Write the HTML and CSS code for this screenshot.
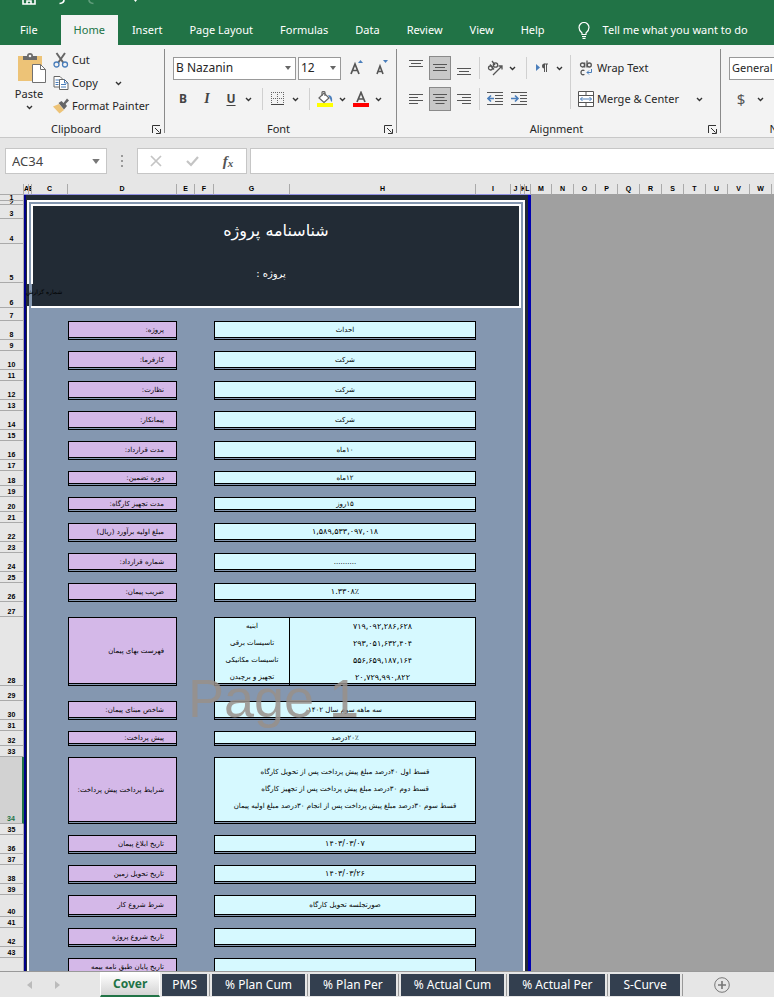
FILE: index.html
```html
<!DOCTYPE html>
<html lang="en">
<head>
<meta charset="utf-8">
<title>Project workbook</title>
<link rel="stylesheet" href="styles.css">
</head>
<body>
<svg class="defs" aria-hidden="true">
  <symbol id="chev" viewBox="0 0 7 5"><path d="M1 1l2.5 2.5L6 1" fill="none" stroke="#333" stroke-width="1.4"/></symbol>
  <symbol id="tri" viewBox="0 0 6 4"><path d="M0 0h6L3 4z" fill="#666"/></symbol>
  <symbol id="launch" viewBox="0 0 9 9"><path d="M.5 8V.5H8M8.500 4v4.500H4M3 3l4.500 4.500" fill="none" stroke="#333"/></symbol>
</svg>

<header class="titlebar">
  <div class="quick">
    <svg width="14" height="5" viewBox="0 0 14 5"><path d="M1 0v4h12V0M5 4V1h4v3" fill="none" stroke="#fff" stroke-width="1.600"/></svg>
    <svg width="8" height="5" viewBox="0 0 8 5"><path d="M6 0q0 3-4.500 3.500" fill="none" stroke="#fff" stroke-width="1.600"/></svg>
    <svg width="8" height="5" viewBox="0 0 8 5"><path d="M1 0q0 3 4.500 3.500" fill="none" stroke="#5f9c7a" stroke-width="1.600"/></svg>
    <svg width="3" height="3" viewBox="0 0 3 3"><path d="M0 0h3L1.500 2z" fill="#fff"/></svg>
  </div>
  <nav class="menu">
    <a href="#file">File</a>
    <a href="#home" class="on">Home</a>
    <a href="#insert">Insert</a>
    <a href="#layout">Page Layout</a>
    <a href="#formulas">Formulas</a>
    <a href="#data">Data</a>
    <a href="#review">Review</a>
    <a href="#view">View</a>
    <a href="#help">Help</a>
    <a href="#tell" class="tell"><svg width="12" height="17" viewBox="0 0 12 17"><path d="M4 12.500V11Q1 8.500 1 5.500a5 5 0 0 1 10 0Q11 8.500 8 11v1.500zM4 14.500h4M4.500 16.300h3" fill="none" stroke="#fff" stroke-width="1.200"/></svg>Tell me what you want to do</a>
  </nav>
</header>

<section class="ribbon">
  <div class="group clipboard">
    <div class="tools">
      <button class="paste">
        <svg width="28" height="30" viewBox="0 0 28 30"><path d="M0 3h24v25H0z" fill="#edc377"/><path d="M5 7V3h4q0-3 3-3t3 3h4v4z" fill="#6b6b6b"/><circle cx="12" cy="3" r="1.300" fill="#f3f3f3"/><path d="M14.500 11.500h8l5 5v13h-13z" fill="#fff" stroke="#707070"/><path d="M22.500 11.500v5h5" fill="none" stroke="#707070"/></svg>
        Paste
        <svg width="7" height="5"><use href="#chev"/></svg>
      </button>
      <div class="cmds">
        <button><svg width="16" height="16" viewBox="0 0 16 16"><path d="M3.500 1l7 10M12 1L5 11" stroke="#666" stroke-width="2" fill="none"/><circle cx="3.500" cy="12.500" r="2.500" fill="none" stroke="#4a7ebb" stroke-width="1.300"/><circle cx="12" cy="12.500" r="2.500" fill="none" stroke="#4a7ebb" stroke-width="1.300"/></svg>Cut</button>
        <button><svg width="16" height="16" viewBox="0 0 16 16"><path d="M1 1.500h6l2 2V12H1z" fill="#fff" stroke="#666"/><path d="M2.500 5h4M2.500 7.500h3M2.500 9.500h3" stroke="#4a7ebb"/><path d="M6.500 4.500h5l3.500 3.500v6.500H6.500z" fill="#fff" stroke="#666"/><path d="M11.500 4.500V8H15M8 9.500h5M8 12h5" stroke="#4a7ebb" fill="none"/></svg>Copy<svg class="far" width="7" height="5"><use href="#chev"/></svg></button>
        <button><svg width="16" height="16" viewBox="0 0 16 16"><path d="M0 8.500l6-2.500 5 6-4.500 3.500z" fill="#edc377"/><path d="M5.500 5l3-2 2 2 3.500-4.500L16 2.500 12.500 6l1.500 2-3 3.500z" fill="#666"/></svg>Format Painter</button>
      </div>
    </div>
    <div class="caption"><span>Clipboard</span><button aria-label="Clipboard options"><svg width="9" height="9"><use href="#launch"/></svg></button></div>
  </div>

  <div class="group font">
    <div class="tools stack">
      <div class="line">
        <label class="combo face"><select aria-label="Font"><option>B Nazanin</option></select><svg width="6" height="4"><use href="#tri"/></svg></label>
        <label class="combo size"><select aria-label="Font size"><option>12</option></select><svg width="6" height="4"><use href="#tri"/></svg></label>
        <button class="icon grow" aria-label="Increase font size"><svg width="16" height="18" viewBox="0 0 16 18"><path d="M2 15L6 5l4 10M3.500 11.500h5" fill="none" stroke="#555" stroke-width="1.700"/><path d="M9 4l2.500-3L14 4z" fill="#4a7ebb"/></svg></button>
        <button class="icon" aria-label="Decrease font size"><svg width="16" height="18" viewBox="0 0 16 18"><path d="M3 15l3-8 3 8M4 12.500h4" fill="none" stroke="#555" stroke-width="1.600"/><path d="M9 1h5l-2.500 3z" fill="#4a7ebb"/></svg></button>
      </div>
      <div class="line">
        <button class="icon b">B</button>
        <button class="icon i">I</button>
        <button class="icon u">U</button>
        <button class="drop" aria-label="Underline style"><svg width="7" height="5"><use href="#chev"/></svg></button>
        <i class="sep"></i>
        <button class="icon" aria-label="Borders"><svg width="14" height="14" viewBox="0 0 14 14"><path d="M.5 0v13M6.500 0v13M12.500 0v13M0 .5h13M0 6.500h13" stroke="#666" stroke-dasharray="1 1"/><path d="M0 12.500h13" stroke="#444"/></svg></button>
        <button class="drop" aria-label="Border style"><svg width="7" height="5"><use href="#chev"/></svg></button>
        <i class="sep"></i>
        <button class="icon" aria-label="Fill color"><svg width="16" height="16" viewBox="0 0 16 16"><path d="M0 12h16v4H0z" fill="#ff0"/><path d="M2 7l5-5 5 5-5 4.500z" fill="#fff" stroke="#666" stroke-width="1.200"/><path d="M5 5V1.500q0-1 1.500-1T8 1.500V5" fill="none" stroke="#666" stroke-width="1.200"/><path d="M11 4q5 0 4 7-1.500-1-2-3.500z" fill="#4a7ebb"/></svg></button>
        <button class="drop" aria-label="Fill color choices"><svg width="7" height="5"><use href="#chev"/></svg></button>
        <button class="icon" aria-label="Font color"><svg width="16" height="16" viewBox="0 0 16 16"><path d="M0 12h16v4H0z" fill="#f00"/><path d="M4 11l4-9.500L12 11M5.500 8h5" fill="none" stroke="#555" stroke-width="1.700"/></svg></button>
        <button class="drop" aria-label="Font color choices"><svg width="7" height="5"><use href="#chev"/></svg></button>
      </div>
    </div>
    <div class="caption"><span>Font</span><button aria-label="Font options"><svg width="9" height="9"><use href="#launch"/></svg></button></div>
  </div>

  <div class="group align">
    <div class="tools">
      <div class="stack">
        <div class="line">
          <button class="tile" aria-label="Top align"><svg width="14" height="18" viewBox="0 0 14 18"><path d="M0 1.500h14M2 4.500h10M0 7.500h14" stroke="#555"/></svg></button>
          <button class="tile on" aria-label="Middle align"><svg width="14" height="18" viewBox="0 0 14 18"><path d="M0 5.500h14M2 8.500h10M0 11.500h14" stroke="#555"/></svg></button>
          <button class="tile" aria-label="Bottom align"><svg width="14" height="18" viewBox="0 0 14 18"><path d="M0 9.500h14M2 12.500h10M0 15.500h14" stroke="#555"/></svg></button>
          <i class="sep"></i>
          <button class="icon" aria-label="Orientation"><svg width="16" height="16" viewBox="0 0 16 16"><g fill="none" stroke="#555" stroke-width="1.300"><circle cx="3.500" cy="8" r="2"/><path d="M3 4.500l4 5"/><circle cx="8.500" cy="5" r="2.200"/><path d="M5 1l3 4"/><path d="M6 15l9-9M11.500 6H15v3.500"/></g></svg></button>
          <button class="drop" aria-label="Orientation choices"><svg width="7" height="5"><use href="#chev"/></svg></button>
          <i class="sep"></i>
          <button class="icon" aria-label="Text direction"><svg width="14" height="12" viewBox="0 0 14 12"><path d="M1 2l4 3.500L1 9z" fill="#4a7ebb"/><path d="M9.500 10V2M11.500 10V2M13 2H9" stroke="#555" fill="none"/><path d="M9.500 1.500a2.500 2.500 0 0 0 0 5z" fill="#555"/></svg></button>
          <button class="drop" aria-label="Text direction choices"><svg width="7" height="5"><use href="#chev"/></svg></button>
        </div>
        <div class="line">
          <button class="tile" aria-label="Align left"><svg width="14" height="14" viewBox="0 0 14 14"><path d="M0 2.500h14M0 5.500h9M0 8.500h14M0 11.500h9" stroke="#555"/></svg></button>
          <button class="tile on" aria-label="Center"><svg width="14" height="14" viewBox="0 0 14 14"><path d="M0 2.500h14M2.500 5.500h9M0 8.500h14M2.500 11.500h9" stroke="#555"/></svg></button>
          <button class="tile" aria-label="Align right"><svg width="14" height="14" viewBox="0 0 14 14"><path d="M0 2.500h14M5 5.500h9M0 8.500h14M5 11.500h9" stroke="#555"/></svg></button>
          <i class="sep"></i>
          <button class="icon" aria-label="Decrease indent"><svg width="16" height="14" viewBox="0 0 16 14"><path d="M0 .5h16M8 3.500h8M8 6.500h8M8 9.500h8M0 12.500h16" stroke="#555"/><path d="M7 6.500H1.500M4 3.500l-3 3 3 3" fill="none" stroke="#4a7ebb" stroke-width="1.600"/></svg></button>
          <button class="icon" aria-label="Increase indent"><svg width="16" height="14" viewBox="0 0 16 14"><path d="M0 .5h16M9 3.500h7M9 6.500h7M9 9.500h7M0 12.500h16" stroke="#555"/><path d="M0 6.500h6M4 3.500l3 3-3 3" fill="none" stroke="#4a7ebb" stroke-width="1.600"/></svg></button>
        </div>
      </div>
      <i class="sep tall"></i>
      <div class="stack wide">
        <button class="cmd"><svg width="16" height="16" viewBox="0 0 16 16"><g fill="none" stroke="#555" stroke-width="1.300"><circle cx="4.500" cy="5" r="2"/><path d="M6.700 2.500v5M9 .5v7"/><circle cx="11.300" cy="5" r="2"/><path d="M6.500 10.500q-3.500-1-3.500 2t3.500 2"/></g><path d="M13.500 9v3.500H9M11 10.500l-2 2 2 2" fill="none" stroke="#4a7ebb"/></svg>Wrap Text</button>
        <button class="cmd"><svg width="16" height="16" viewBox="0 0 16 16"><path d="M.5 .5h15v15H.5zM.5 4.500h15M.5 11.500h15M8 .5v4M8 11.500v4" fill="#fff" stroke="#555"/><path d="M2.500 8h11M4.500 6L2.500 8l2 2M11.500 6l2 2-2 2" fill="none" stroke="#4a7ebb"/></svg>Merge &amp; Center<svg class="far" width="7" height="5"><use href="#chev"/></svg></button>
      </div>
    </div>
    <div class="caption"><span>Alignment</span><button aria-label="Alignment options"><svg width="9" height="9"><use href="#launch"/></svg></button></div>
  </div>

  <div class="group number">
    <div class="tools stack">
      <div class="line"><label class="combo format"><select aria-label="Number format"><option>General</option></select></label></div>
      <div class="line"><button class="icon cash">$</button><button class="drop" aria-label="Currency choices"><svg width="7" height="5"><use href="#chev"/></svg></button><button class="icon cash">%</button></div>
    </div>
    <div class="caption"><span>Number</span></div>
  </div>
</section>

<section class="formula">
  <label class="namebox"><input type="text" value="AC34" aria-label="Name box"><svg width="8" height="5" viewBox="0 0 6 4"><path d="M0 0h6L3 4z" fill="#777"/></svg></label>
  <svg class="dots" width="2" height="12" viewBox="0 0 2 12"><path d="M0 0h2v2H0zM0 5h2v2H0zM0 10h2v2H0z" fill="#999"/></svg>
  <div class="entry">
    <button aria-label="Cancel"><svg width="12" height="12" viewBox="0 0 12 12"><path d="M1 1l10 10M11 1L1 11" stroke="#c4c4c4" stroke-width="1.700"/></svg></button>
    <button aria-label="Enter"><svg width="13" height="12" viewBox="0 0 13 12"><path d="M1 6l4 4 7-8" fill="none" stroke="#c4c4c4" stroke-width="2.200"/></svg></button>
    <button class="fx" aria-label="Insert function">f<small>x</small></button>
  </div>
  <input class="bar" type="text" aria-label="Formula bar">
</section>

<main class="viewport">
<table class="sheet">
  <colgroup><col class="c-n"><col class="c-a"><col class="c-b"><col class="c-c"><col class="c-d"><col class="c-e"><col class="c-f"><col class="c-g"><col class="c-h"><col class="c-i"><col class="c-j"><col class="c-k"><col class="c-l"><col class="c-m"><col class="c-x"><col class="c-x"><col class="c-x"><col class="c-x"><col class="c-x"><col class="c-x"><col class="c-x"><col class="c-x"><col class="c-x"><col class="c-x"><col class="c-x"></colgroup>
  <thead><tr><th></th><th>A</th><th>B</th><th>C</th><th>D</th><th>E</th><th>F</th><th>G</th><th>H</th><th>I</th><th>J</th><th>K</th><th>L</th><th>M</th><th>N</th><th>O</th><th>P</th><th>Q</th><th>R</th><th>S</th><th>T</th><th>U</th><th>V</th><th>W</th><th></th></tr></thead>
  <tbody>
    <tr class="h6"><th><span>1</span></th>
      <td class="top" colspan="12" rowspan="6"><div class="frame"><div class="banner"><h1>شناسنامه پروژه</h1><p>پروژه :</p></div></div><div class="report"><span>شماره گزارش</span></div></td></tr>
    <tr class="h4"><th><span>2</span></th></tr>
    <tr class="h14"><th>3</th></tr>
    <tr class="h25"><th>4</th></tr>
    <tr class="h39"><th>5</th></tr>
    <tr class="h25"><th>6</th></tr>
    <tr class="h13"><th>7</th></tr>
    <tr class="h19"><th>8</th><td colspan="3"></td><td class="key">پروژه:</td><td colspan="2"></td><td class="val" colspan="2">احداث</td></tr>
    <tr class="gap"><th>9</th></tr>
    <tr class="h19"><th>10</th><td colspan="3"></td><td class="key">کارفرما:</td><td colspan="2"></td><td class="val" colspan="2">شرکت</td></tr>
    <tr class="gap"><th>11</th></tr>
    <tr class="h19"><th>12</th><td colspan="3"></td><td class="key">نظارت:</td><td colspan="2"></td><td class="val" colspan="2">شرکت</td></tr>
    <tr class="gap"><th>13</th></tr>
    <tr class="h19"><th>14</th><td colspan="3"></td><td class="key">پیمانکار:</td><td colspan="2"></td><td class="val" colspan="2">شرکت</td></tr>
    <tr class="gap"><th>15</th></tr>
    <tr class="h19"><th>16</th><td colspan="3"></td><td class="key">مدت قرارداد:</td><td colspan="2"></td><td class="val" colspan="2">۱۰ماه</td></tr>
    <tr class="gap"><th>17</th></tr>
    <tr class="h15"><th>18</th><td colspan="3"></td><td class="key">دوره تضمین:</td><td colspan="2"></td><td class="val" colspan="2">۱۲ماه</td></tr>
    <tr class="gap"><th>19</th></tr>
    <tr class="h15"><th>20</th><td colspan="3"></td><td class="key">مدت تجهیز کارگاه:</td><td colspan="2"></td><td class="val" colspan="2">۱۵روز</td></tr>
    <tr class="gap"><th>21</th></tr>
    <tr class="h19"><th>22</th><td colspan="3"></td><td class="key">مبلغ اولیه برآورد (ریال)</td><td colspan="2"></td><td class="val num" colspan="2">۱,۵۸۹,۵۳۳,۰۹۷,۰۱۸</td></tr>
    <tr class="gap"><th>23</th></tr>
    <tr class="h19"><th>24</th><td colspan="3"></td><td class="key">شماره قرارداد:</td><td colspan="2"></td><td class="val" colspan="2">..........</td></tr>
    <tr class="gap"><th>25</th></tr>
    <tr class="h19"><th>26</th><td colspan="3"></td><td class="key">ضریب پیمان:</td><td colspan="2"></td><td class="val num" colspan="2">۱.۳۳۰۸٪</td></tr>
    <tr class="gap15"><th>27</th></tr>
    <tr class="h69"><th>28</th><td colspan="3"></td><td class="key">فهرست بهای پیمان</td><td colspan="2"></td><td class="val"><div class="lines">ابنیه<br>تاسیسات برقی<br>تاسیسات مکانیکی<br>تجهیز و برچیدن</div></td><td class="val num rest"><div class="lines">۷۱۹,۰۹۲,۲۸۶,۶۲۸<br>۲۹۳,۰۵۱,۶۳۲,۴۰۴<br>۵۵۶,۶۵۹,۱۸۷,۱۶۴<br>۲۰,۷۲۹,۹۹۰,۸۲۲</div></td></tr>
    <tr class="gap15"><th>29</th></tr>
    <tr class="h19"><th>30</th><td colspan="3"></td><td class="key">شاخص مبنای پیمان:</td><td colspan="2"></td><td class="val" colspan="2">سه ماهه سوم سال ۱۴۰۲</td></tr>
    <tr class="gap"><th>31</th></tr>
    <tr class="h15"><th>32</th><td colspan="3"></td><td class="key">پیش پرداخت:</td><td colspan="2"></td><td class="val" colspan="2">۲۰٪درصد</td></tr>
    <tr class="gap"><th>33</th></tr>
    <tr class="h67 current"><th>34</th><td colspan="3"></td><td class="key">شرایط پرداخت پیش پرداخت:</td><td colspan="2"></td><td class="val terms" colspan="2">قسط اول ۴۰درصد مبلغ پیش پرداخت پس از تحویل کارگاه<br>قسط دوم ۳۰درصد مبلغ پیش پرداخت پس از تجهیز کارگاه<br>قسط سوم ۳۰درصد مبلغ پیش پرداخت پس از انجام ۳۰درصد مبلغ اولیه پیمان</td></tr>
    <tr class="gap"><th>35</th></tr>
    <tr class="h19"><th>36</th><td colspan="3"></td><td class="key">تاریخ ابلاغ پیمان</td><td colspan="2"></td><td class="val num" colspan="2">۱۴۰۳/۰۳/۰۷</td></tr>
    <tr class="gap"><th>37</th></tr>
    <tr class="h19"><th>38</th><td colspan="3"></td><td class="key">تاریخ تحویل زمین</td><td colspan="2"></td><td class="val num" colspan="2">۱۴۰۳/۰۳/۲۶</td></tr>
    <tr class="gap"><th>39</th></tr>
    <tr class="h22"><th>40</th><td colspan="3"></td><td class="key">شرط شروع کار</td><td colspan="2"></td><td class="val" colspan="2">صورتجلسه تحویل کارگاه</td></tr>
    <tr class="gap"><th>41</th></tr>
    <tr class="h19"><th>42</th><td colspan="3"></td><td class="key">تاریخ شروع پروژه</td><td colspan="2"></td><td class="val" colspan="2"></td></tr>
    <tr class="gap"><th>43</th></tr>
    <tr class="h19"><th></th><td colspan="3"></td><td class="key">تاریخ پایان طبق نامه بیمه</td><td colspan="2"></td><td class="val" colspan="2"></td></tr>
  </tbody>
</table>
<div class="watermark">Page 1</div>
</main>

<footer class="tabs">
  <div class="nav">
    <button aria-label="Previous sheet"><svg width="5" height="8" viewBox="0 0 5 8"><path d="M5 0v8L0 4z" fill="#bbb"/></svg></button>
    <button aria-label="Next sheet"><svg width="5" height="8" viewBox="0 0 5 8"><path d="M0 0v8l5-4z" fill="#bbb"/></svg></button>
  </div>
  <button class="tab active">Cover</button>
  <button class="tab">PMS</button>
  <button class="tab">% Plan Cum</button>
  <button class="tab">% Plan Per</button>
  <button class="tab">% Actual Cum</button>
  <button class="tab">% Actual Per</button>
  <button class="tab">S-Curve</button>
  <button class="add" aria-label="New sheet"><svg width="16" height="16" viewBox="0 0 16 16"><circle cx="8" cy="8" r="7.300" fill="none" stroke="#777"/><path d="M8 4v8M4 8h8" stroke="#777" stroke-width="1.600"/></svg></button>
</footer>
</body>
</html>
```
FILE: styles.css
```css
* { box-sizing: border-box; }

body {
  margin: 0;
  height: 100vh;
  display: flex;
  flex-direction: column;
  overflow: hidden;
  background: #e6e6e6;
  color: #262626;
  font: 12px/16px "Noto Sans", "Open Sans", sans-serif;
}

button, input, select {
  font: inherit;
  color: inherit;
  margin: 0;
  padding: 0;
  border: 0;
  background: none;
  appearance: none;
}

svg { display: block; flex: none; }
.defs { position: absolute; width: 0; height: 0; }

/* Title bar and menu */
.titlebar { flex: none; height: 45px; background: #217346; overflow: hidden; }
.quick { display: flex; height: 15px; padding-left: 22px; gap: 22px; }
.quick svg:last-child { margin-left: 16px; }
.menu { display: flex; gap: 1px; height: 30px; white-space: nowrap; font-size: 11px; }
.menu a {
  display: flex;
  align-items: center;
  padding: 0 13px;
  color: #fff;
  text-decoration: none;
}
.menu a:first-child { padding: 0 22px 0 20px; }
.menu a.on { background: #f3f3f3; color: #217346; }
.menu a.tell { gap: 13px; padding-left: 19px; }

/* Ribbon */
.ribbon {
  flex: none;
  display: flex;
  height: 93px;
  background: #f3f3f3;
  border-bottom: 1px solid #c8c8c8;
  overflow: hidden;
  white-space: nowrap;
  font-size: 11px;
}
.group { flex: none; display: flex; flex-direction: column; padding-top: 4px; position: relative; }
.group::after {
  content: "";
  position: absolute;
  right: 0;
  top: 4px;
  bottom: 4px;
  border-right: 1px solid #8a8a8a;
}
.clipboard { width: 165px; }
.font { width: 232px; padding-left: 8px; }
.align { width: 324px; padding-left: 8px; }
.number { width: 132px; padding-left: 8px; }
.number::after { display: none; }
.tools { display: flex; flex: 1; }
.stack { display: flex; flex-direction: column; gap: 7px; padding-top: 7px; }
.line { display: flex; align-items: center; height: 24px; }
.caption { display: flex; align-items: center; height: 16px; }
.caption span { flex: 1; text-align: center; }
.caption button { width: 9px; margin-right: 4px; }

.paste { display: flex; flex-direction: column; align-items: center; justify-content: flex-start; width: 42px; margin-left: 8px; padding-top: 4px; gap: 3px; }
.paste svg:first-child { margin-left: 6px; }
.cmds { display: flex; flex-direction: column; gap: 7px; padding: 3px 0 0 3px; }
.cmds button, .cmd { display: flex; align-items: center; gap: 3px; }
.cmds button { height: 16px; }
.cmd { height: 24px; }
.far { margin-left: 14px; }

.combo { display: grid; align-items: center; height: 23px; border: 1px solid #999; background: #fff; font-size: 12px; }
.combo select, .combo svg { grid-area: 1 / 1; }
.combo select { width: 100%; height: 21px; padding-left: 2px; }
.combo svg { justify-self: end; margin-right: 4px; pointer-events: none; }
.face { width: 123px; margin-right: 2px; }
.size { width: 43px; }
.format { width: 120px; font-size: 11px; }

.icon { display: flex; align-items: center; justify-content: center; width: 20px; height: 22px; margin-right: 4px; }
.icon.grow { margin: 0 5px 0 6px; }
.drop { display: flex; align-items: center; justify-content: center; width: 14px; height: 22px; margin: 0 2px 0 -4px; }
.sep { width: 1px; height: 22px; margin: 0 5px; background: #d0d0d0; }
.tile + .sep { margin-left: 2px; }
.sep.tall { height: 54px; margin: 6px 7px 0 2px; }
.b, .i, .u { color: #444; font-weight: 700; font-size: 12px; }
.i { font-family: "Liberation Serif", serif; font-style: italic; font-size: 14px; }
.u { text-decoration: underline; text-underline-offset: 2px; }
.cash { width: 24px; color: #555; font-size: 15px; }
.tile { display: flex; align-items: center; justify-content: center; width: 22px; height: 24px; margin-right: 2px; }
.tile.on { background: #c8c8c8; border: 1px solid #8a8a8a; }

/* Formula bar */
.formula { flex: none; display: flex; align-items: center; height: 46px; padding-left: 5px; }
.namebox { display: flex; align-items: center; width: 102px; height: 26px; border: 1px solid #c6c6c6; background: #fff; padding: 0 6px; color: #444; font-size: 13px; }
.namebox input { flex: 1; min-width: 0; }
.dots { margin: 0 14px; }
.entry { display: flex; width: 110px; height: 26px; border: 1px solid #c6c6c6; background: #fff; }
.entry button { flex: 1; display: flex; align-items: center; justify-content: center; }
.entry .fx { color: #555; font: italic 700 15px/16px "Liberation Serif", serif; }
.fx small { font-size: 11px; padding-top: 4px; }
.bar { flex: 1; min-width: 0; height: 26px; margin-left: 3px; padding: 0 6px; border: 1px solid #c6c6c6; border-right: 0; background: #fff; }

/* Worksheet */
.viewport { flex: 1; min-height: 0; overflow: hidden; position: relative; background: #a0a0a0; }
.sheet {
  width: 794px;
  table-layout: fixed;
  border-spacing: 0;
  background: linear-gradient(to right,
    #e6e6e6 24px, #00008a 24px 26px, #222b35 26px 27px, #fff 27px 29px,
    #8497b0 29px 523px, #fff 523px 525px, #222b35 525px 528px,
    #0000b0 528px 531px, #a0a0a0 531px);
}
.c-n { width: 24px; }
.c-a { width: 5px; }
.c-b { width: 3px; }
.c-c { width: 36px; }
.c-d { width: 109px; }
.c-e { width: 18px; }
.c-f { width: 19px; }
.c-g { width: 76px; }
.c-h { width: 186px; }
.c-i { width: 35px; }
.c-j { width: 10px; }
.c-k { width: 4px; }
.c-l { width: 6px; }
.c-m { width: 21px; }
.c-x { width: 22px; }

th {
  padding: 0;
  overflow: hidden;
  background: #e6e6e6;
  color: #000;
  font: 700 7px/8px "Liberation Sans", sans-serif;
}
thead th { height: 11px; border-right: 1px solid #aaa; border-bottom: 1px solid #8f8fe0; }
thead th:first-child { border-bottom-color: #aaa; }
thead th:nth-child(n+14) { border-bottom-color: #a0a0a0; }
tbody th { vertical-align: bottom; border-bottom: 1px solid #aaa; border-right: 1px solid #aaa; }
tbody th span { display: block; height: 3px; line-height: 3px; overflow: hidden; }
.current th { background: #d2d2d2; color: #217346; border-right: 2px solid #217346; }

td { padding: 0; font: 7px/10px "DejaVu Sans", sans-serif; color: #000; text-align: center; }
.h4 { height: 4px; }
.h6 { height: 6px; }
.h6 th span { height: 5px; line-height: 5px; }
.gap { height: 11px; }
.h13 { height: 13px; }
.h14 { height: 14px; }
.h15 { height: 15px; }
.gap15 { height: 15px; }
.h19 { height: 19px; }
.h22 { height: 22px; }
.h25 { height: 25px; }
.h39 { height: 39px; }
.h67 { height: 67px; }
.h69 { height: 69px; }

.key, .val { direction: rtl; border: 1px solid #000; border-bottom: 3px double #000; background-clip: padding-box; white-space: nowrap; }
.key { background-color: #d4b8e8; text-align: right; padding-right: 12px; }
.val { background-color: #d6f9ff; }
.num { direction: ltr; font-size: 8px; }
.rest { border-left: 0; }
.lines { height: 65px; line-height: 17px; }
.terms { line-height: 17px; }

.top { position: relative; vertical-align: top; background: #222b35; border-left: 2px solid #00008a; border-right: 3px solid #0000b0; }
.frame { margin: 5px 3px 0 1px; padding: 2px 2px 0; border: 2px solid #fff; border-bottom: 0; background: #8497b0; }
.banner { height: 104px; padding-top: 12px; border: 2px solid #fff; background: #222b35; color: #fff; direction: rtl; }
h1 { margin: 0; font-size: 16px; font-weight: 400; line-height: 26px; }
.banner p { margin: 20px 10px 0 0; font-size: 10px; line-height: 20px; }
.report {
  position: absolute;
  left: 0;
  bottom: 2px;
  height: 22px;
  padding-top: 3px;
  color: #000;
  font-size: 6px;
  background: linear-gradient(to right, #222b35 3px, #8497b0 3px 6px, #222b35 6px);
}

.watermark {
  position: absolute;
  left: 188px;
  top: 482px;
  color: rgba(152, 143, 138, 0.85);
  font: 54px/64px "Liberation Sans", sans-serif;
  pointer-events: none;
}

/* Sheet tabs */
.tabs { flex: none; display: flex; align-items: flex-start; height: 26px; border-top: 1px solid #999; white-space: nowrap; overflow: hidden; }
.nav { display: flex; gap: 23px; width: 100px; height: 25px; padding-left: 27px; align-items: center; }
.tab { height: 22px; margin: 2px 5px 0 0; padding: 0 13px; background: #333f4f; color: #fff; position: relative; }
.tab:not(.active)::after { content: ""; position: absolute; right: -3px; top: 0; bottom: 0; border-right: 1px solid #999; }
.tab.active { height: 25px; margin: 0 2px 0 0; padding: 0 12px; border: 1px solid #fff; border-bottom: 2px solid #217346; background: linear-gradient(#fff, #d4d4d4); color: #217346; font-weight: 700; }
.tab.active + .tab { padding: 0 10px; }
.add { margin: 5px 0 0 29px; }
```
